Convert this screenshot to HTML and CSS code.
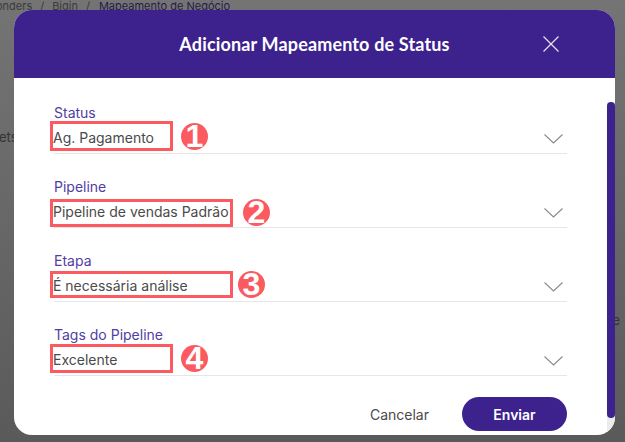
FILE: index.html
```html
<!DOCTYPE html>
<html lang="pt-BR">
<head>
    <meta charset="UTF-8">
    <title>Adicionar Mapeamento de Status</title>
    <link rel="stylesheet" href="styles.css">
</head>
<body>
    <div class="page-behind">
        <div class="breadcrumb">
            <span>onders</span><span class="sep">/</span><span>Bigin</span><span class="sep">/</span><span class="current">Mapeamento de Negócio</span>
        </div>
        <div class="behind-left">ets</div>
        <div class="behind-right">e</div>
    </div>

    <div class="modal">
        <div class="modal-header">
            <h1>Adicionar Mapeamento de Status</h1>
            <svg class="close-icon" width="16" height="16" viewBox="0 0 16 16">
                <path d="M0.5 0.5 L15.5 15.5 M15.5 0.5 L0.5 15.5"/>
            </svg>
        </div>
        <div class="modal-body">
            <div class="scrollbar"><div class="scrollbar-thumb"></div></div>
            <form class="form">
                <div class="form-group">
                    <label>Status</label>
                    <div class="select">
                        <span>Ag. Pagamento</span>
                        <svg class="chevron" width="19" height="10" viewBox="0 0 19 10"><path d="M0.5 0.5 L9.5 9 L18.5 0.5"/></svg>
                        <div class="mark mark-one"></div>
                        <div class="badge badge-one">1</div>
                    </div>
                </div>
                <div class="form-group">
                    <label>Pipeline</label>
                    <div class="select">
                        <span>Pipeline de vendas Padrão</span>
                        <svg class="chevron" width="19" height="10" viewBox="0 0 19 10"><path d="M0.5 0.5 L9.5 9 L18.5 0.5"/></svg>
                        <div class="mark mark-two"></div>
                        <div class="badge badge-two">2</div>
                    </div>
                </div>
                <div class="form-group">
                    <label>Etapa</label>
                    <div class="select">
                        <span>É necessária análise</span>
                        <svg class="chevron" width="19" height="10" viewBox="0 0 19 10"><path d="M0.5 0.5 L9.5 9 L18.5 0.5"/></svg>
                        <div class="mark mark-three"></div>
                        <div class="badge badge-three">3</div>
                    </div>
                </div>
                <div class="form-group">
                    <label>Tags do Pipeline</label>
                    <div class="select">
                        <span>Excelente</span>
                        <svg class="chevron" width="19" height="10" viewBox="0 0 19 10"><path d="M0.5 0.5 L9.5 9 L18.5 0.5"/></svg>
                        <div class="mark mark-four"></div>
                        <div class="badge badge-four">4</div>
                    </div>
                </div>
                <div class="form-actions">
                    <span class="cancel">Cancelar</span>
                    <button type="button" class="submit">Enviar</button>
                </div>
            </form>
        </div>
    </div>
</body>
</html>
```

FILE: styles.css
```css
html,
body {
    height: 100%;
}

body {
    margin: 0;
    overflow: hidden;
    background: linear-gradient(to bottom, #747474, #5a5a5a);
    font-family: Inter, "Liberation Sans", sans-serif;
}

.page-behind {
    height: 442px;
    color: #333333;
    font-size: 13px;
}

.breadcrumb {
    display: flex;
    gap: 8px;
    margin-left: -4px;
    font-size: 11px;
    line-height: 13px;
    color: #3a3a3a;
}

.breadcrumb .current {
    color: #261a4d;
    margin-left: 1px;
}

.behind-left {
    margin-top: 116px;
    margin-left: -1px;
    line-height: 16px;
}

.behind-right {
    margin-top: 167px;
    line-height: 16px;
    text-align: right;
    padding-right: 5px;
}

.modal {
    position: absolute;
    left: 14px;
    top: 10px;
    width: 601px;
    height: 425px;
    border-radius: 18px;
    background: #ffffff;
    overflow: hidden;
}

.modal-header {
    height: 68px;
    background-color: #3d228e;
    display: flex;
    align-items: center;
    justify-content: center;
    position: relative;
}

.modal-header h1 {
    margin: 0;
    color: #ffffff;
    font-family: Lato, "Open Sans", sans-serif;
    font-size: 18px;
    font-weight: 700;
    letter-spacing: 0.15px;
}

.close-icon {
    position: absolute;
    left: 529px;
    top: 26px;
}

.close-icon path {
    stroke: #e8e4f2;
    stroke-width: 1.2;
    fill: none;
}

.modal-body {
    position: relative;
    height: 357px;
}

.scrollbar {
    position: absolute;
    right: 0;
    top: 24px;
    bottom: 0;
    width: 8px;
    background-color: #ececec;
}

.scrollbar-thumb {
    height: 316px;
    background-color: #3d228e;
    border-radius: 4px;
}

.form {
    padding: 26px 48px 0 40px;
}

.form-group {
    height: 74px;
}

.form-group label {
    display: block;
    margin-bottom: 1px;
    color: #523da3;
    font-size: 14px;
    line-height: 17px;
}

.select {
    position: relative;
    display: flex;
    align-items: center;
    height: 32px;
    box-sizing: border-box;
    border-bottom: 1px solid #e6e6e6;
    color: #4a4a4a;
    font-size: 14px;
}

.select span {
    margin-left: -1px;
}

.chevron {
    position: absolute;
    right: 4px;
    top: 12px;
}

.chevron path {
    stroke: #8a8a8a;
    stroke-width: 1.1;
    fill: none;
}

.mark {
    position: absolute;
    left: -4px;
    box-sizing: border-box;
    border: 3px solid #fb5b60;
}

.mark-one {
    top: -1px;
    width: 123px;
    height: 30px;
}

.mark-two {
    top: 3px;
    width: 183px;
    height: 28px;
}

.mark-three {
    top: 1px;
    width: 183px;
    height: 27px;
}

.mark-four {
    top: 0;
    width: 123px;
    height: 29px;
}

.badge {
    position: absolute;
    width: 27px;
    height: 27px;
    border-radius: 50%;
    background-color: #fb5b60;
    color: #ffffff;
    font-family: "Liberation Sans", sans-serif;
    font-size: 32px;
    font-weight: 700;
    line-height: 27px;
    text-align: center;
}

.badge-one {
    left: 127px;
    top: 1px;
}

.badge-two {
    left: 189px;
    top: 3px;
}

.badge-three {
    left: 184px;
    top: 1px;
}

.badge-four {
    left: 127px;
    top: 1px;
}

.form-actions {
    display: flex;
    justify-content: flex-end;
    align-items: center;
    gap: 33px;
    margin-top: -3px;
}

.cancel {
    color: #4a4a4a;
    font-size: 14px;
}

.submit {
    width: 105px;
    height: 34px;
    border: none;
    border-radius: 17px;
    background-color: #3d228e;
    color: #ffffff;
    font-family: Inter, "Liberation Sans", sans-serif;
    font-size: 14px;
    font-weight: 600;
}
```
